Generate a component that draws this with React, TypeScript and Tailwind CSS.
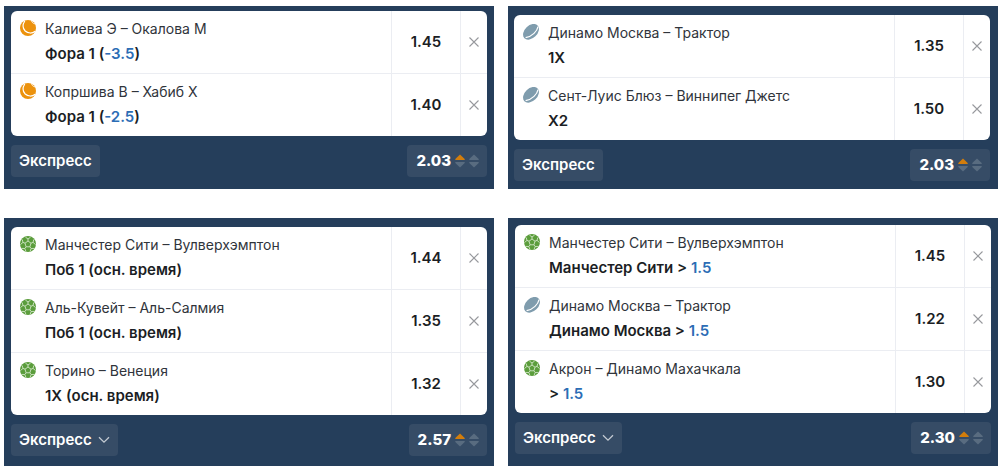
import clsx from 'clsx'

type Sport = 'tennis' | 'hockey' | 'football'

type Bet = {
  sport: Sport
  match: string
  before?: string
  value?: string
  after?: string
  odds: string
}

type Coupon = {
  id: string
  bets: Bet[]
  total: string
  selectable?: boolean
  className: string
}

const coupons: Coupon[] = [
  {
    id: 'tennis',
    total: '2.03',
    className: 'px-[7px] pt-[5px] pb-3 gap-[9px]',
    bets: [
      { sport: 'tennis', match: 'Калиева Э – Окалова М', before: 'Фора 1 (', value: '-3.5', after: ')', odds: '1.45' },
      { sport: 'tennis', match: 'Копршива В – Хабиб Х', before: 'Фора 1 (', value: '-2.5', after: ')', odds: '1.40' },
    ],
  },
  {
    id: 'hockey',
    total: '2.03',
    className: 'pl-1.5 pr-2 pt-[9px] pb-2 gap-[9px]',
    bets: [
      { sport: 'hockey', match: 'Динамо Москва – Трактор', before: '1X', odds: '1.35' },
      { sport: 'hockey', match: 'Сент-Луис Блюз – Виннипег Джетс', before: 'X2', odds: '1.50' },
    ],
  },
  {
    id: 'football',
    total: '2.57',
    selectable: true,
    className: 'px-[7px] pt-[9px] pb-[9px] gap-[9px]',
    bets: [
      { sport: 'football', match: 'Манчестер Сити – Вулверхэмптон', before: 'Поб 1 (осн. время)', odds: '1.44' },
      { sport: 'football', match: 'Аль-Кувейт – Аль-Салмия', before: 'Поб 1 (осн. время)', odds: '1.35' },
      { sport: 'football', match: 'Торино – Венеция', before: '1X (осн. время)', odds: '1.32' },
    ],
  },
  {
    id: 'mixed',
    total: '2.30',
    selectable: true,
    className: 'px-[7px] pt-[7px] pb-3 gap-[9px]',
    bets: [
      { sport: 'football', match: 'Манчестер Сити – Вулверхэмптон', before: 'Манчестер Сити > ', value: '1.5', odds: '1.45' },
      { sport: 'hockey', match: 'Динамо Москва – Трактор', before: 'Динамо Москва > ', value: '1.5', odds: '1.22' },
      { sport: 'football', match: 'Акрон – Динамо Махачкала', before: '> ', value: '1.5', odds: '1.30' },
    ],
  },
]

function SportIcon({ sport }: { sport: Sport }) {
  if (sport === 'tennis') {
    return (
      <svg viewBox="0 0 16 16" className="mt-px size-4 shrink-0" aria-hidden="true">
        <circle cx="8" cy="8" r="8" fill="#ec920d" />
        <path d="M4.800 1C2.600 4.300 2.700 8.400 5.200 11C8 13.700 12.200 13.600 15.200 11.300" fill="none" stroke="#fff" strokeWidth="1.200" />
        <path d="M11.400 0.300C11.600 2 12.800 3.400 14.900 3.900" fill="none" stroke="#fff" strokeWidth="0.900" />
      </svg>
    )
  }
  if (sport === 'hockey') {
    return (
      <svg viewBox="0 0 16 16" className="mt-px size-4 shrink-0" aria-hidden="true">
        <ellipse cx="8" cy="7.800" rx="9.200" ry="6.300" fill="#7f9cad" transform="rotate(-44 8 7.800)" />
        <path d="M15 2.600C14.300 7 9.200 12.500 2.600 13.700" fill="none" stroke="#fff" strokeWidth="1.200" />
      </svg>
    )
  }
  return (
    <svg viewBox="0 0 16 16" className="mt-px size-4 shrink-0" aria-hidden="true">
      <circle cx="8" cy="8" r="8" fill="#5b9d3c" />
      <g fill="none" stroke="#d3e6c8" strokeWidth="0.900" strokeLinejoin="round">
        <path d="M8 5L11 7.200L9.900 10.800H6.100L5 7.200Z" />
        <path d="M8 5V3M11 7.200L13 6.400M9.900 10.800L11.200 12.500M6.100 10.800L4.800 12.500M5 7.200L3 6.400" />
        <path d="M5.400 1.100L8 3L10.600 1.100M13.800 3.500L13 6.400L15.600 8.600M14.300 12.400L11.200 12.500L10.100 15.400M5.900 15.400L4.800 12.500L1.700 12.400M0.400 8.600L3 6.400L2.200 3.500" />
      </g>
    </svg>
  )
}

function Arrows({ active = false }: { active?: boolean }) {
  return (
    <svg viewBox="0 0 10 14" className="h-3.5 w-2.5" aria-hidden="true">
      <path d="M5 0.500L9.700 5.100V6H0.300V5.100Z" fill={active ? '#d27d0c' : '#596c80'} />
      <path d="M5 13.500L9.700 8.900V8H0.300V8.900Z" fill="#596c80" />
    </svg>
  )
}

function BetRow({ bet }: { bet: Bet }) {
  return (
    <li className="flex">
      <div className="flex min-w-0 flex-1 gap-[9px] px-[9px] py-2">
        <SportIcon sport={bet.sport} />
        <div className="min-w-0">
          <p className="text-sm leading-5 text-[#30343b]">{bet.match}</p>
          <p className="mt-1 text-[15px] leading-[22px] font-semibold text-[#1b1e24]">
            {bet.before}
            {bet.value && <span className="text-[#2c6db5]">{bet.value}</span>}
            {bet.after}
          </p>
        </div>
      </div>
      <div className="flex w-[69px] shrink-0 items-center justify-center border-l border-[#ebedf2] text-[15px] font-semibold text-[#1b1e24]">
        {bet.odds}
      </div>
      <button
        type="button"
        aria-label="Удалить"
        className="flex w-[27px] shrink-0 items-center justify-center border-l border-[#ebedf2] text-[#97999d]"
      >
        <svg viewBox="0 0 10 10" className="size-2.5" aria-hidden="true">
          <path d="M0.500 0.500L9.500 9.500M9.500 0.500L0.500 9.500" stroke="currentColor" strokeWidth="1.100" />
        </svg>
      </button>
    </li>
  )
}

function CouponType({ selectable }: { selectable?: boolean }) {
  if (!selectable) {
    return (
      <button type="button" className="h-8 rounded bg-[#364c66] px-2 text-[15px] font-semibold text-white">
        Экспресс
      </button>
    )
  }
  return (
    <div className="relative">
      <select
        aria-label="Тип купона"
        defaultValue="express"
        className="h-8 appearance-none rounded bg-[#364c66] pr-[26px] pl-2 text-[15px] font-semibold text-white"
      >
        <option value="express">Экспресс</option>
      </select>
      <svg viewBox="0 0 12 8" className="pointer-events-none absolute top-3 right-2 h-2 w-3" aria-hidden="true">
        <path d="M1 1.200L6 6.200L11 1.200" fill="none" stroke="#c3cad2" strokeWidth="1.300" />
      </svg>
    </div>
  )
}

function CouponPanel({ coupon }: { coupon: Coupon }) {
  return (
    <section className={clsx('flex flex-col bg-[#253e5b]', coupon.className)}>
      <ul className="divide-y divide-[#ebedf2] overflow-hidden rounded-md bg-white">
        {coupon.bets.map((bet) => (
          <BetRow key={bet.match} bet={bet} />
        ))}
      </ul>
      <div className="flex items-center justify-between">
        <CouponType selectable={coupon.selectable} />
        <div className="flex h-8 items-center gap-1 rounded bg-[#364c66] pr-2 pl-[9px]">
          <span className="text-[15px] font-extrabold text-white">{coupon.total}</span>
          <Arrows active />
          <Arrows />
        </div>
      </div>
    </section>
  )
}

export default function App() {
  return (
    <main className="grid grid-cols-2 gap-x-3.5 gap-y-[29px] bg-white pt-1.5 pr-[3px] pb-[3px] pl-1 font-['Inter','Noto_Sans',sans-serif]">
      {coupons.map((coupon) => (
        <CouponPanel key={coupon.id} coupon={coupon} />
      ))}
    </main>
  )
}
